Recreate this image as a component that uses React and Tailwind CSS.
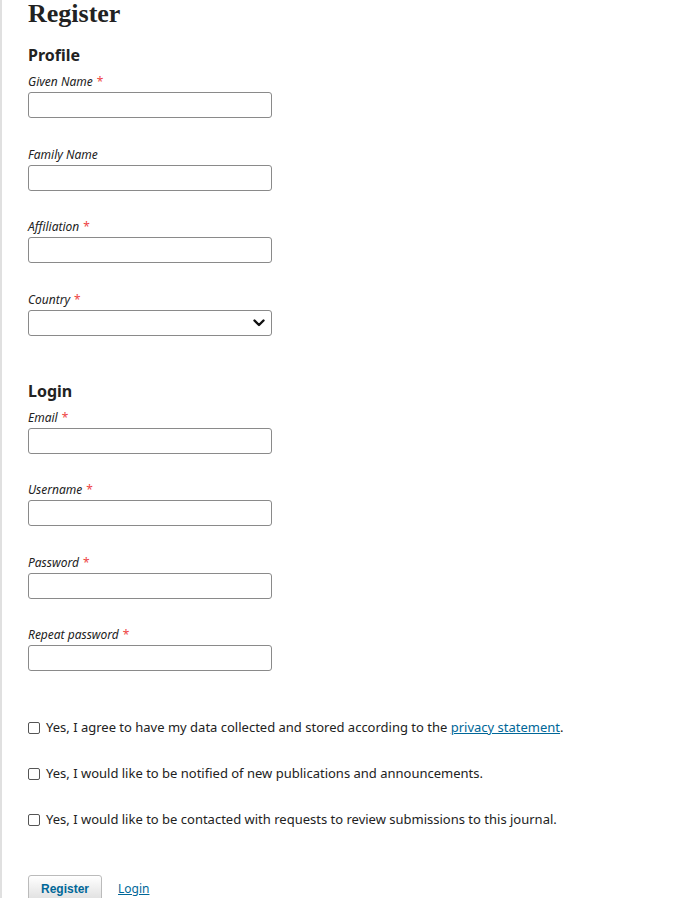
import React from "react";

const sans = { fontFamily: '"Noto Sans", "Open Sans", sans-serif' };

function Label({ text, required }) {
  return (
    <div className="h-[16px] mb-[2px] text-[12px] leading-[16px] italic text-[#222]" style={sans}>
      {text}
      {required && <span className="text-[#e44] not-italic ml-[4px]">*</span>}
    </div>
  );
}

function Field({ label, required, select, last }) {
  return (
    <div className={last ? "" : "mb-[28.5px]"}>
      <Label text={label} required={required} />
      {select ? (
        <div className="relative w-[244px] h-[26px] border border-[#8a8a8a] rounded-[3px] bg-white flex items-center justify-end pr-[6px]">
          <svg width="12" height="8" viewBox="0 0 12 8">
            <path d="M1.5 1.5 L6 6 L10.5 1.5" fill="none" stroke="#111" strokeWidth="2.4" strokeLinecap="round" strokeLinejoin="round" />
          </svg>
        </div>
      ) : (
        <div className="w-[244px] h-[26px] border border-[#8a8a8a] rounded-[3px] bg-white" />
      )}
    </div>
  );
}

function Check({ children }) {
  return (
    <div className="flex items-center h-[20px] text-[13px] text-[#222]" style={sans}>
      <span className="w-[12px] h-[12px] border border-[#555] rounded-[2px] bg-white mr-[6px] shrink-0" />
      <span>{children}</span>
    </div>
  );
}

export default function App() {
  return (
    <div className="min-h-[898px] bg-white border-l-2 border-[#e0e0e0] pl-[26px] overflow-hidden">
      <h1 className="text-[26px] leading-[28px] font-bold text-[#222] pt-0" style={{ fontFamily: '"Liberation Serif", "DejaVu Serif", serif' }}>
        Register
      </h1>
      <h2 className="mt-[16px] text-[16px] leading-[22px] font-bold text-[#222]" style={sans}>Profile</h2>
      <div className="mt-[8px]">
        <Field label="Given Name" required />
        <Field label="Family Name" />
        <Field label="Affiliation" required />
        <Field label="Country" required select last />
      </div>
      <h2 className="mt-[44px] text-[16px] leading-[22px] font-bold text-[#222]" style={sans}>Login</h2>
      <div className="mt-[8px]">
        <Field label="Email" required />
        <Field label="Username" required />
        <Field label="Password" required />
        <Field label="Repeat password" required last />
      </div>
      <div className="mt-[47px] flex flex-col gap-[26px]">
        <Check>
          Yes, I agree to have my data collected and stored according to the{" "}
          <a href="#" className="text-[#006798] underline">privacy statement</a>.
        </Check>
        <Check>Yes, I would like to be notified of new publications and announcements.</Check>
        <Check>Yes, I would like to be contacted with requests to review submissions to this journal.</Check>
      </div>
      <div className="mt-[45px] flex items-center gap-[16px]">
        <button className="h-[28px] px-[12px] border border-[#bbb] rounded-[3px] bg-gradient-to-b from-white to-[#ddd] text-[12px] font-bold text-[#006798]" style={{ fontFamily: '"Liberation Sans", Arial, sans-serif' }}>
          Register
        </button>
        <a href="#" className="text-[12px] text-[#006798] underline" style={sans}>Login</a>
      </div>
    </div>
  );
}
